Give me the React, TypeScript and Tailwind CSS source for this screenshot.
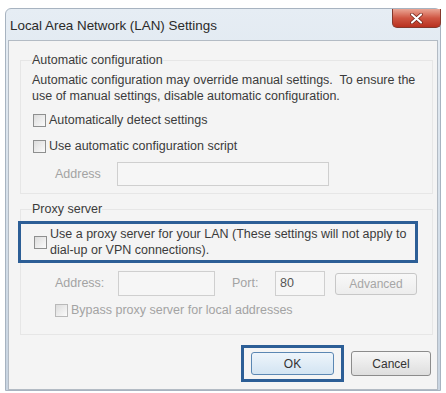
import React from "react";

const font = { fontFamily: '"Liberation Sans", Arial, sans-serif' };

function Check({ disabled }: { disabled?: boolean }) {
  return (
    <span
      className={
        "inline-block h-[13px] w-[13px] shrink-0 border bg-gradient-to-br from-[#dcdcdc] to-[#fbfbfb] " +
        (disabled ? "border-[#b9b9b9]" : "border-[#8e8f8f]")
      }
    />
  );
}

function Btn({ children, disabled, primary }: { children: React.ReactNode; disabled?: boolean; primary?: boolean }) {
  return (
    <div
      className={
        "flex items-center justify-center rounded-[3px] border text-[12px] " +
        (primary
          ? "h-[23px] w-[83px] border-[#5b87b3] bg-gradient-to-b from-[#eef5fb] to-[#d3e4f2] text-[#333]"
          : disabled
          ? "h-[22px] w-[82px] border-[#c7c7c7] bg-gradient-to-b from-[#f8f8f8] to-[#ededed] text-[#a6a6a6]"
          : "h-[25px] w-[80px] border-[#8c8c8c] bg-gradient-to-b from-[#f7f7f7] to-[#dedede] text-[#333]")
      }
    >
      {children}
    </div>
  );
}

export default function App() {
  return (
    <div className="h-[393px] w-[446px] overflow-hidden bg-white pl-[5px] pt-[8px]" style={font}>
      <div className="h-[383px] w-[436px] rounded-t-[6px] border border-[#a7b3c0] bg-gradient-to-b from-[#e6edf4] via-[#d6e0ea] to-[#c8d4e1]">
        {/* title bar */}
        <div className="flex h-[31px] items-start">
          <div className="pl-[4px] pt-[7px] text-[13.4px] text-[#2a2a2a]">Local Area Network (LAN) Settings</div>
          <div className="ml-auto mr-[-1px] flex h-[19px] w-[49px] items-center justify-center rounded-b-[5px] border border-t-0 border-[#84382c] bg-gradient-to-b from-[#e9a595] via-[#cf5643] to-[#b8301e]">
            <svg width="13" height="11" viewBox="0 0 13 11">
              <path d="M2 1.5 L11 9.5 M11 1.5 L2 9.5" stroke="#6b1d12" strokeWidth="3.6" strokeLinecap="round" />
              <path d="M2 1.5 L11 9.5 M11 1.5 L2 9.5" stroke="#ffffff" strokeWidth="2.2" strokeLinecap="round" />
            </svg>
          </div>
        </div>

        {/* body */}
        <div className="mx-[2px] h-[350px] border border-[#b3bbc4] bg-[#f4f4f4] text-[12.5px] text-[#3b3b3b]">
          <fieldset className="ml-[11px] mt-[11px] w-[413px] border border-[#e6e6e6] pb-[7px] pl-[11px]">
            <legend className="leading-[16px]">Automatic configuration</legend>
            <p className="mt-[4px] leading-[16px]">
              Automatic configuration may override manual settings.&nbsp; To ensure the
              <br />
              use of manual settings, disable automatic configuration.
            </p>
            <div className="mt-[8px] flex h-[16px] items-center gap-[3px] pl-[1px]">
              <Check />
              <span>Automatically detect settings</span>
            </div>
            <div className="mt-[10px] flex h-[16px] items-center gap-[3px] pl-[1px]">
              <Check />
              <span>Use automatic configuration script</span>
            </div>
            <div className="mt-[8px] flex items-center">
              <span className="ml-[23px] w-[62px] text-[#a3a3a3]">Address</span>
              <div className="h-[24px] w-[212px] border border-[#cfcfcf] bg-[#f6f6f6]" />
            </div>
          </fieldset>

          <fieldset className="ml-[11px] mt-[7px] w-[413px] border border-[#e6e6e6] pb-[17px]">
            <legend className="ml-[11px] leading-[16px]">Proxy server</legend>
            <div className="ml-[-3px] mt-[4px] flex h-[42px] w-[400px] items-center gap-[3px] border-[3px] border-[#2c5e96] pl-[13px]">
              <Check />
              <span className="leading-[16px]">
                Use a proxy server for your LAN (These settings will not apply to
                <br />
                dial-up or VPN connections).
              </span>
            </div>
            <div className="mt-[8px] flex items-center text-[#a3a3a3]">
              <span className="ml-[34px] w-[63px]">Address:</span>
              <div className="h-[25px] w-[97px] border border-[#cfcfcf] bg-[#f6f6f6]" />
              <span className="ml-[17px] w-[43px]">Port:</span>
              <div className="flex h-[25px] w-[50px] items-center border border-[#cfcfcf] bg-[#f6f6f6] pl-[4px] text-[#555]">80</div>
              <div className="ml-[10px]">
                <Btn disabled>Advanced</Btn>
              </div>
            </div>
            <div className="mt-[7px] flex h-[14px] items-center gap-[3px] pl-[34px] text-[#a3a3a3]">
              <Check disabled />
              <span>Bypass proxy server for local addresses</span>
            </div>
          </fieldset>

          <div className="mr-[6px] mt-[10px] flex items-center justify-end gap-[7px]">
            <div className="border-[3px] border-[#2c5e96] px-[7px] py-[4px]">
              <Btn primary>OK</Btn>
            </div>
            <Btn>Cancel</Btn>
          </div>
        </div>
      </div>
    </div>
  );
}
